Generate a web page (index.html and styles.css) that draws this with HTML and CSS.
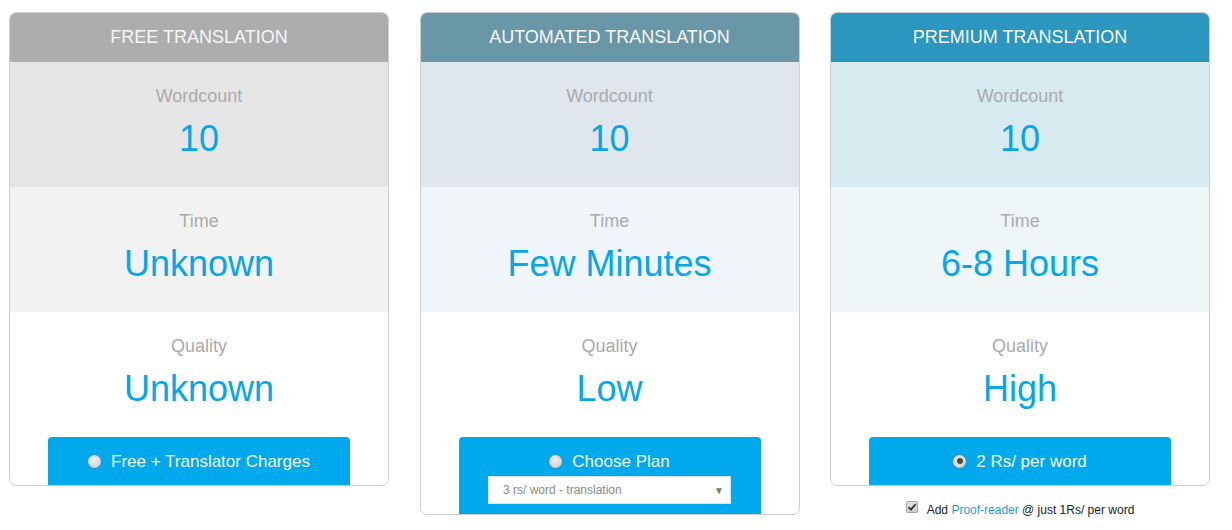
FILE: index.html
```html
<!DOCTYPE html>
<html lang="en">
<head>
<meta charset="utf-8">
<title>Translation Plans</title>
<link rel="stylesheet" href="styles.css">
</head>
<body>
<div class="plans">
  <div class="col">
    <div class="card">
      <div class="card-head head-free">FREE TRANSLATION</div>
      <div class="sec sec1 free1"><div class="lbl">Wordcount</div><div class="val">10</div></div>
      <div class="sec free2"><div class="lbl">Time</div><div class="val">Unknown</div></div>
      <div class="sec"><div class="lbl">Quality</div><div class="val">Unknown</div></div>
      <div class="btn">
        <label class="opt"><span class="radio"></span>Free + Translator Charges</label>
      </div>
    </div>
  </div>
  <div class="col">
    <div class="card">
      <div class="card-head head-auto">AUTOMATED TRANSLATION</div>
      <div class="sec auto1"><div class="lbl">Wordcount</div><div class="val">10</div></div>
      <div class="sec auto2"><div class="lbl">Time</div><div class="val">Few Minutes</div></div>
      <div class="sec"><div class="lbl">Quality</div><div class="val">Low</div></div>
      <div class="btn btn-tall">
        <label class="opt"><span class="radio"></span>Choose Plan</label>
        <div class="select"><span>3 rs/ word - translation</span><span class="arrow">▼</span></div>
      </div>
    </div>
  </div>
  <div class="col">
    <div class="card">
      <div class="card-head head-prem">PREMIUM TRANSLATION</div>
      <div class="sec prem1"><div class="lbl">Wordcount</div><div class="val">10</div></div>
      <div class="sec prem2"><div class="lbl">Time</div><div class="val">6-8 Hours</div></div>
      <div class="sec"><div class="lbl">Quality</div><div class="val">High</div></div>
      <div class="btn">
        <label class="opt"><span class="radio checked"></span>2 Rs/ per word</label>
      </div>
    </div>
    <div class="proof">
      <span class="check"><svg width="10" height="10" viewBox="0 0 10 10"><path d="M1.5 5.2 L4 7.6 L8.6 2" fill="none" stroke="#333" stroke-width="1.8"/></svg></span>
      <span>Add <a href="#">Proof-reader</a> @ just 1Rs/ per word</span>
    </div>
  </div>
</div>
</body>
</html>
```

FILE: styles.css
```css
* { box-sizing: border-box; }
html, body { margin: 0; padding: 0; background: #fff; }
body { font-family: "Liberation Sans", Arial, sans-serif; }

.plans {
  display: flex;
  gap: 30.5px;
  padding: 12px 0 0 9px;
  align-items: flex-start;
}
.col { width: 380px; display: flex; flex-direction: column; align-items: center; }
.card {
  width: 380px;
  border: 1px solid #cfcfcf;
  border-radius: 7px;
  overflow: hidden;
  text-align: center;
}
.card-head {
  height: 49px;
  line-height: 48px;
  color: #f6f6f6;
  font-size: 18px;
}
.head-free { background: #acadac; }
.head-auto { background: #6a97a7; }
.head-prem { background: #2b96be; }

.sec {
  height: 125px;
  padding-top: 24px;
}
.free1 { background: #e5e5e5; }
.free2 { background: #f2f2f2; }
.auto1 { background: #dfe6ec; }
.auto2 { background: #eff5f8; }
.prem1 { background: #d6eaf0; }
.prem2 { background: #eef6f8; }

.lbl { font-size: 18px; line-height: 20px; color: #ababab; }
.val { font-size: 36px; line-height: 40px; color: #07a6e9; margin-top: 13px; }

.btn {
  width: 302px;
  margin: 0 auto;
  background: #00a8ec;
  border-radius: 4px 4px 0 0;
  height: 48px;
  padding-top: 15px;
}
.btn-tall { height: 77px; }
.opt {
  display: inline-flex;
  align-items: center;
  color: #f4f9fc;
  font-size: 17px;
  line-height: 20px;
}
.radio {
  width: 13px;
  height: 13px;
  border-radius: 50%;
  margin-right: 10px;
  margin-top: -2px;
  background: radial-gradient(circle at 50% 40%, #f0f0f0 0, #d9d9d9 55%, #b8b8b8 100%);
  box-shadow: 0 0 0 1px rgba(120,120,120,0.35);
  position: relative;
}
.radio.checked::after {
  content: "";
  position: absolute;
  left: 3.5px; top: 3.5px;
  width: 6px; height: 6px;
  border-radius: 50%;
  background: #4a4a4a;
}
.select {
  width: 243px;
  height: 28px;
  margin: 4px auto 0;
  background: #fff;
  border: 1px solid #d9e4ea;
  display: flex;
  align-items: center;
  justify-content: space-between;
  padding: 0 6px 0 14px;
  font-size: 12px;
  color: #8a8a8a;
}
.select .arrow { font-size: 10px; color: #7a7a7a; }

.proof {
  margin-top: 17px;
  display: flex;
  align-items: center;
  font-size: 12px;
  color: #222;
}
.proof a { color: #1a9ee0; text-decoration: none; }
.check {
  width: 12px;
  height: 12px;
  border-radius: 2px;
  background: linear-gradient(#e6e6e6, #c9c9c9);
  box-shadow: inset 0 0 0 1px #a8a8a8;
  display: inline-flex;
  align-items: center;
  justify-content: center;
  margin-right: 9px;
  margin-top: -6px;
}
```
